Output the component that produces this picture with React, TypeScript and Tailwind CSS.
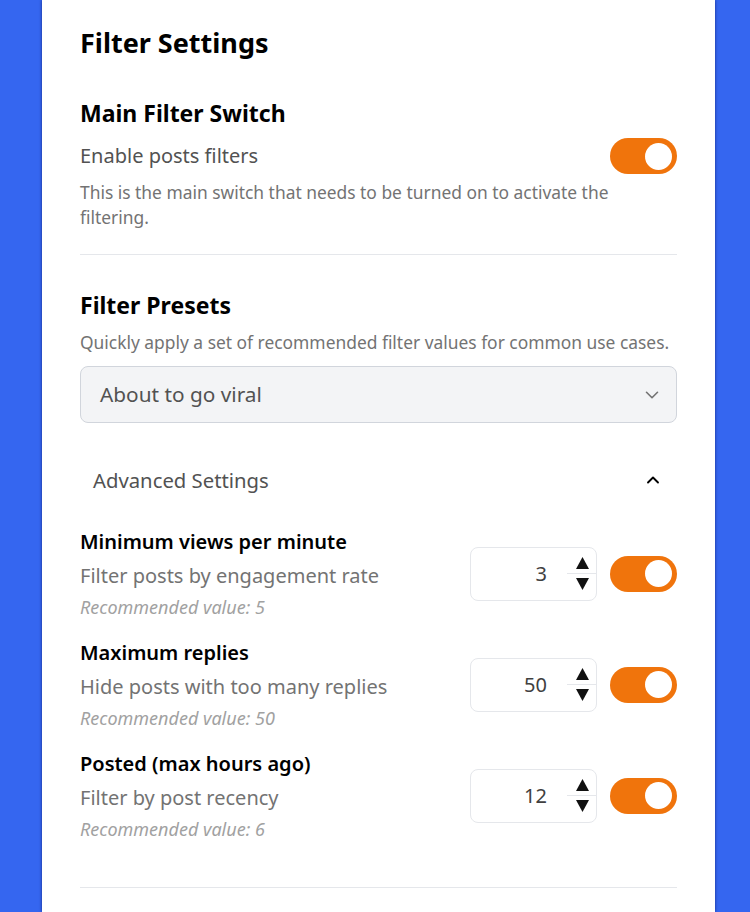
import { ChevronDown, ChevronUp } from "lucide-react";

const font = { fontFamily: '"Noto Sans", "Open Sans", sans-serif' };

function Toggle() {
  return (
    <div className="w-[67px] h-[36px] rounded-full bg-[#f0740c] flex items-center justify-end pr-[5px] flex-shrink-0">
      <div className="w-[27px] h-[27px] rounded-full bg-white" />
    </div>
  );
}

function NumberBox({ value }: { value: string }) {
  return (
    <div className="w-[127px] h-[54px] rounded-lg border border-gray-200 bg-white flex items-center justify-end">
      <span className="text-[20px] text-neutral-700 mr-[20px]">{value}</span>
      <div className="flex flex-col items-center w-[29px]">
        <svg width="13" height="12" viewBox="0 0 13 12" className="-mr-[1px]">
          <path d="M6.5 0 L13 12 L0 12 Z" fill="#111" />
        </svg>
        <div className="w-[29px] h-px bg-gray-200 my-[4px]" />
        <svg width="13" height="12" viewBox="0 0 13 12" className="-mr-[1px]">
          <path d="M0 0 L13 0 L6.5 12 Z" fill="#111" />
        </svg>
      </div>
    </div>
  );
}

const rows = [
  { title: "Minimum views per minute", sub: "Filter posts by engagement rate", rec: "5", value: "3" },
  { title: "Maximum replies", sub: "Hide posts with too many replies", rec: "50", value: "50" },
  { title: "Posted (max hours ago)", sub: "Filter by post recency", rec: "6", value: "12" },
];

export default function App() {
  return (
    <div className="h-[912px] bg-[#3566f0] pl-[42px] overflow-hidden" style={font}>
      <div className="w-[673px] h-full bg-white shadow-[0_0_3px_rgba(0,0,60,0.6)] px-[38px] pt-[26px]">
        <h1 className="text-[27px] font-bold text-black leading-[34px]">Filter Settings</h1>

        {/* Main switch */}
        <section className="mt-[38px] pb-[24px] border-b border-gray-200">
          <h2 className="text-[23px] font-bold text-black leading-[30px]">Main Filter Switch</h2>
          <div className="flex items-center justify-between mt-[10px]">
            <span className="text-[20px] text-neutral-600">Enable posts filters</span>
            <Toggle />
          </div>
          <p className="text-[17.4px] text-neutral-500 leading-[25px] mt-[6px] pr-[60px]">
            This is the main switch that needs to be turned on to activate the filtering.
          </p>
        </section>

        {/* Presets */}
        <section className="pt-[35px]">
          <h2 className="text-[23px] font-bold text-black leading-[30px]">Filter Presets</h2>
          <p className="text-[17.4px] text-neutral-500 mt-[10px] leading-[24px] whitespace-nowrap">
            Quickly apply a set of recommended filter values for common use cases.
          </p>
          <div className="mt-[12px] h-[57px] rounded-lg bg-gray-100 border border-gray-300 flex items-center justify-between pl-[19px] pr-[13px]">
            <span className="text-[20.8px] text-neutral-600">About to go viral</span>
            <ChevronDown size={22} className="text-neutral-500" strokeWidth={1.75} />
          </div>
        </section>

        {/* Advanced */}
        <section className="pb-[45px] border-b border-gray-200">
          <div className="flex items-center justify-between pl-[13px] pr-[14px] mt-[41px] h-[32px]">
            <span className="text-[20.3px] text-neutral-600">Advanced Settings</span>
            <ChevronUp size={20} className="text-black" strokeWidth={2.25} />
          </div>
          <div className="mt-[33px] flex flex-col gap-[20px]">
            {rows.map((r) => (
              <div key={r.title} className="flex items-center justify-between">
                <div className="flex flex-col">
                  <span className="text-[20px] font-semibold text-black leading-[26px]">{r.title}</span>
                  <span className="text-[20px] text-neutral-500 leading-[30px] mt-[6px]">{r.sub}</span>
                  <span className="text-[18px] italic text-neutral-400 leading-[26px] mt-[3px]">
                    Recommended value: {r.rec}
                  </span>
                </div>
                <div className="flex items-center gap-[13px] -mt-[2px]">
                  <NumberBox value={r.value} />
                  <Toggle />
                </div>
              </div>
            ))}
          </div>
        </section>
      </div>
    </div>
  );
}
